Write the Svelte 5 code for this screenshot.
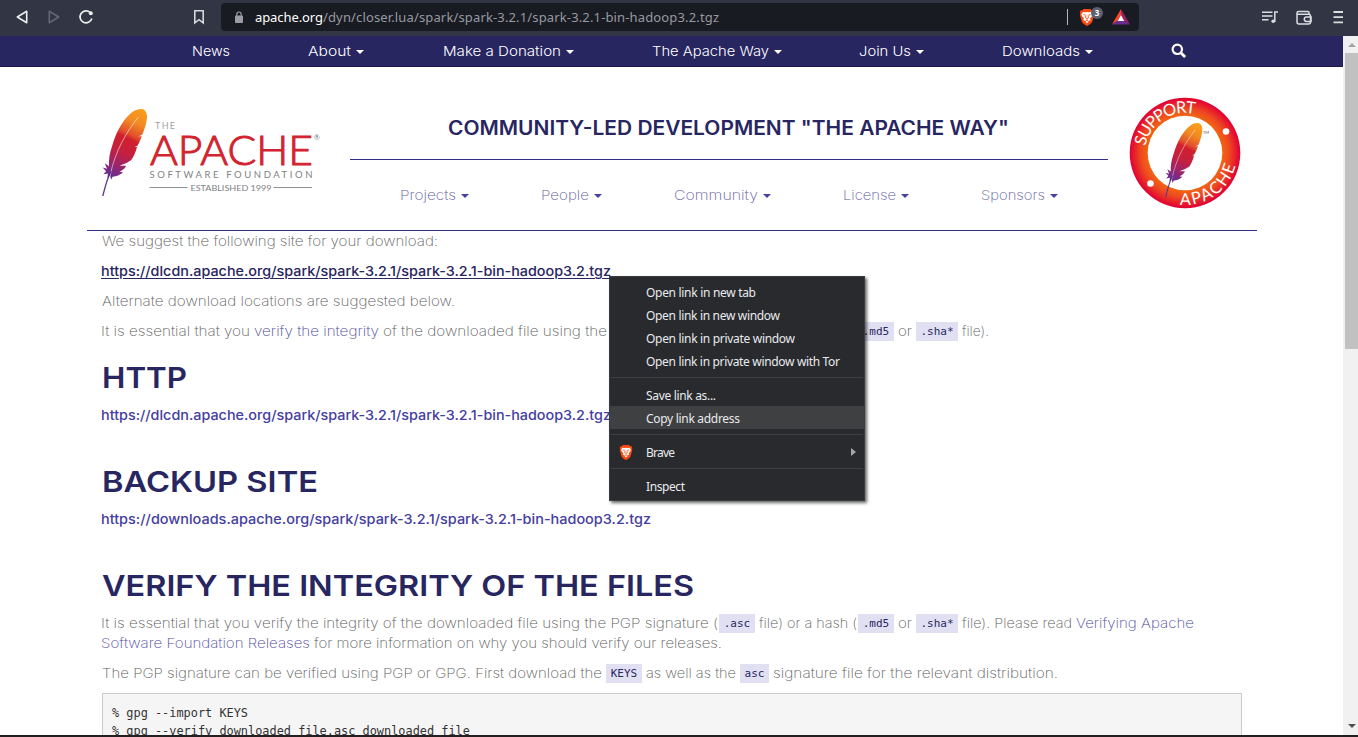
<script>
  const topNav = [
    ['News', 192, 230, false],
    ['About', 308, 351, true],
    ['Make a Donation', 443, 561, true],
    ['The Apache Way', 652, 769, true],
    ['Join Us', 859, 911, true],
    ['Downloads', 1002, 1080, true]
  ];
  const subNav = [
    ['Projects', 400, 456],
    ['People', 541, 589],
    ['Community', 674, 758],
    ['License', 843, 896],
    ['Sponsors', 981, 1045]
  ];
  const intro = [
    [['We suggest the following site for your download:', 102, 438, 'text']],
    [['https://dlcdn.apache.org/spark/spark-3.2.1/spark-3.2.1-bin-hadoop3.2.tgz', 101, 611, 'strong hovered']],
    [['Alternate download locations are suggested below.', 102, 455, 'text']],
    [
      ['It is essential that you', 101, 250, 'text'],
      ['verify the integrity', 254, 379, 'link'],
      ['of the downloaded file using the', 383, 607, 'text'],
      ['PGP signature (', 611, 718, 'text'],
      ['.asc', 719, 755, 'code'],
      ['file) or a hash (', 759, 857, 'text'],
      ['.md5', 858, 894, 'code'],
      ['or', 898, 912, 'text'],
      ['.sha*', 916, 958, 'code'],
      ['file).', 962, 989, 'text']
    ]
  ];
  const verify = [
    [
      ['It is essential that you verify the integrity of the downloaded file using the PGP signature (', 101, 718, 'text'],
      ['.asc', 719, 755, 'code'],
      ['file) or a hash (', 759, 857, 'text'],
      ['.md5', 858, 894, 'code'],
      ['or', 898, 912, 'text'],
      ['.sha*', 916, 958, 'code'],
      ['file). Please read', 962, 1072, 'text'],
      ['Verifying Apache', 1076, 1194, 'link']
    ],
    [
      ['Software Foundation Releases', 101, 310, 'link'],
      ['for more information on why you should verify our releases.', 314, 722, 'text']
    ],
    [
      ['The PGP signature can be verified using PGP or GPG. First download the', 102, 602, 'text'],
      ['KEYS', 606, 642, 'code'],
      ['as well as the', 646, 736, 'text'],
      ['asc', 740, 769, 'code'],
      ['signature file for the relevant distribution.', 773, 1058, 'text']
    ]
  ];
  const menu = [
    ['Open link in new tab', 110],
    ['Open link in new window', 134],
    ['Open link in private window', 149],
    ['Open link in private window with Tor', 194],
    null,
    ['Save link as...', 70],
    ['Copy link address', 94],
    null,
    ['Brave', 29],
    null,
    ['Inspect', 39]
  ];

  function naturalWidth(node) {
    const range = document.createRange();
    range.selectNodeContents(node);
    return range.getBoundingClientRect().width;
  }
  // Spreads the letters so the text fills the width given.
  function fit(node, width) {
    node.style.width = width + 'px';
    node.style.letterSpacing = (width - naturalWidth(node)) / (node.textContent.length - 1) + 'px';
  }
  function widen(node, width) {
    const natural = naturalWidth(node);
    node.style.width = natural + 'px';
    node.style.marginRight = width - natural + 'px';
    node.style.transform = `scaleX(${width / natural})`;
  }
  const gap = (list, i, start) => list[i][1] - (i ? list[i - 1][2] : start);
</script>

{#snippet row(segs)}
  <div class="line">
    {#each segs as s, i}
      {#if s[3] === 'code'}
        <code style:width="{s[2] - s[1]}px" style:margin-left="{gap(segs, i, 102)}px">{s[0]}</code>
      {:else}
        <span class="fit {s[3]}" style:margin-left="{gap(segs, i, 102)}px" use:widen={s[2] - s[1]}>{s[0]}</span>
      {/if}
    {/each}
  </div>
{/snippet}

{#snippet lion(w, h)}
  <svg width={w} height={h} viewBox="0 0 16 18">
    <path fill="#fb4a10" d="M4.5 1h7l1.3 1.4 1.5-.1 1 2.2-.5 1.3.3 1.2-2 7.1c-.3 1-3.8 3.6-5.1 3.9-1.300-.3-4.800-2.900-5.100-3.900l-2-7.100.3-1.200L.7 4.500l1-2.200 1.500.1z" />
    <path fill="#fff" d="M4 4l2.200.3L8 4l1.800.3L12 4l1.600 2.200-.6 2-2 2.200.7 1.500-2 1.100L8 11.700 6.300 13l-2-1.100.7-1.500-2-2.200-.6-2zM6.300 13.700L8 12.800l1.700.9L8 15.200z" />
    <path fill="none" stroke="#fb4a10" stroke-width=".9" d="M4.300 6.600l2.300.6M11.700 6.600l-2.300.6M7 7.500l-.5 2.300L8 10.500l1.500-.7L9 7.500M8 10.500v1.200" />
  </svg>
{/snippet}

{#snippet feather(id)}
  <defs>
    <linearGradient id={id} x1="42" y1="0" x2="8" y2="72" gradientUnits="userSpaceOnUse">
      <stop offset="0" stop-color="#f9a01b" />
      <stop offset=".2" stop-color="#f28a22" />
      <stop offset=".36" stop-color="#e2502c" />
      <stop offset=".42" stop-color="#d0202f" />
      <stop offset=".6" stop-color="#c5203e" />
      <stop offset=".78" stop-color="#9b2468" />
      <stop offset=".88" stop-color="#7a2a86" />
      <stop offset="1" stop-color="#5c2d91" />
    </linearGradient>
  </defs>
  <path fill="url(#{id})" d="M40 .1c3 .4 5 3.400 5 7.900-.2 6-2.300 11.800-4.600 17.500L36.500 27.500l3.300-.4c-1.200 3.700-2.600 6.800-4.300 9.600l-2.800 1.200 2.300.2c-1.300 5.200-3.200 9.400-5.700 13l-4.300 2.600-7.500 3 6.700.1c-1.500 2.700-3.500 4.600-6.600 6l3.500.5c-3 2.700-6.600 4.200-10.500 4.400l-1.500 3-1-4.200-2.700 2.500.5-4.600-4.400.8 2.600-3-3.500-3.800 4.400 1.400-2.200-5.500 4.200 2.900c-.5-6.800.8-13.500 3.200-20.500C14.500 22 22 9 31 2.600 33.800.9 37-.2 40 .1z" />
  <path fill="none" stroke="#fff" stroke-opacity=".6" stroke-width=".9" d="M36.500 8C25 22 13 42 8 67" />
  <path fill="none" stroke="#5c3390" stroke-width="1.300" d="M9 62C5.500 69 3 78 .8 87" />
{/snippet}

<div class="screen">
  <div class="browser">
    <svg class="history" width="100" height="36" viewBox="0 0 100 36" fill="none" stroke-width="1.600" stroke-linejoin="round">
      <path stroke="#eeeef1" d="M26.700 11.300v11.400L17.300 17z" />
      <path stroke="#646874" d="M49.300 11.300v11.400L58.700 17z" />
      <path stroke="#eeeef1" stroke-width="1.700" d="M90.200 12.500A6 6 0 1 0 91.800 18.500" />
      <circle cx="90.800" cy="13.300" r="2" fill="#eeeef1" />
    </svg>
    <svg class="bookmark" width="12" height="16" viewBox="0 0 12 16" fill="none" stroke="#d6d7dc" stroke-width="1.600">
      <path d="M1.800 1.800h8.400v12L6 10.700l-4.200 3.100z" />
    </svg>
    <div class="address">
      <svg class="lock" width="10" height="13" viewBox="0 0 10 13">
        <rect x="1" y="4.500" width="8" height="7.500" rx="1" fill="#9b9ca6" />
        <path d="M2.800 5V3.200a2.200 2.200 0 0 1 4.400 0V5" fill="none" stroke="#9b9ca6" stroke-width="1.200" />
      </svg>
      <span class="fit host" use:fit={68}>apache.org</span><span class="fit path" use:fit={396}>/dyn/closer.lua/spark/spark-3.2.1/spark-3.2.1-bin-hadoop3.2.tgz</span>
      <div class="shields">
        {@render lion(16, 18)}
        <b>3</b>
      </div>
      <svg class="bat" width="18" height="16" viewBox="0 0 18 16">
        <path d="M9 0L0 15.500 6 11.500 9 6z" fill="#ff4724" />
        <path d="M9 0l9 15.500-6-4L9 6z" fill="#9e1f63" />
        <path d="M0 15.500h18l-6-4H6z" fill="#662d91" />
        <path d="M9 6l3.300 6H5.700z" fill="#fff" />
      </svg>
    </div>
    <svg class="tools" width="84" height="20" viewBox="0 0 84 20" fill="none" stroke="#dcdde1" stroke-width="1.500">
      <path d="M0 4.200h10.500M0 8h10.500M0 11.800h6.500M12.800 14V4h3.200" />
      <circle cx="11.200" cy="13.300" r="1.800" fill="#dcdde1" stroke="none" />
      <path d="M47 6V4.500q0-1-1-1H36.500q-1.500 0-1.500 1.500v9q0 2 2 2h9.500q2 0 2-2V8q0-1.700-1.700-1.700H35.500" />
      <path d="M49 9h-4.500a2.200 2.200 0 0 0 0 4.400H49z" />
      <path d="M71.500 4h9.500M71.500 9.200h9.500M71.500 14.400h9.500" stroke-width="1.800" />
    </svg>
  </div>

  <div class="viewport">
    <div class="page">
      <nav class="top">
        {#each topNav as n, i}
          <a style:margin-left="{i ? n[1] - topNav[i - 1][2] - (topNav[i - 1][3] ? 13 : 0) : n[1]}px">
            <span class="fit" use:widen={n[2] - n[1]}>{n[0]}</span>{#if n[3]}<i class="caret"></i>{/if}
          </a>
        {/each}
        <svg class="search" width="16" height="16" viewBox="0 0 16 16" fill="none" stroke="#fff">
          <circle cx="6.300" cy="6.300" r="4.700" stroke-width="2.200" />
          <path d="M9.800 9.800l4.300 4.300" stroke-width="2.800" />
        </svg>
      </nav>

      <header>
        <svg class="logo" width="220" height="92" viewBox="0 0 220 92">
          <g transform="translate(1 2)">{@render feather('plumeLogo')}</g>
          <g font-family="Lato, sans-serif">
            <text x="54" y="22" font-size="9" fill="#a0a1a4" textLength="20">THE</text>
            <text x="49" y="58" font-size="41.500" font-weight="300" fill="#d2232e" stroke="#d2232e" stroke-width="1" textLength="163" lengthAdjust="spacingAndGlyphs">APACHE</text>
            <text x="213" y="33" font-size="7" fill="#77787b">®</text>
            <text x="48.500" y="71" font-size="9.500" fill="#808184" textLength="163">SOFTWARE FOUNDATION</text>
            <text x="89.500" y="84" font-size="8" fill="#808184" textLength="81" lengthAdjust="spacingAndGlyphs">ESTABLISHED 1999</text>
          </g>
          <path d="M48.500 80.500h38M172.500 80.500h38.500" stroke="#909295" />
        </svg>

        <div class="middle">
          <h1><span class="fit" use:widen={561}>COMMUNITY-LED DEVELOPMENT "THE APACHE WAY"</span></h1>
          <nav class="sub">
            {#each subNav as n, i}
              <a style:margin-left="{i ? n[1] - subNav[i - 1][2] - 13 : 50}px">
                <span class="fit" use:widen={n[2] - n[1]}>{n[0]}</span><i class="caret"></i>
              </a>
            {/each}
          </nav>
        </div>

        <svg class="badge" width="112" height="112" viewBox="0 0 112 112">
          <defs>
            <radialGradient id="ring">
              <stop offset=".65" stop-color="#f26a0f" />
              <stop offset=".8" stop-color="#ee4a20" />
              <stop offset="1" stop-color="#e00034" />
            </radialGradient>
            <path id="arcTop" d="M16 56A40 40 0 0 1 96 56" transform="rotate(-33 56 56)" />
            <path id="arcBottom" d="M4 56A52 52 0 0 0 108 56" transform="rotate(-35 56 56)" />
          </defs>
          <circle cx="56" cy="56" r="55.300" fill="url(#ring)" />
          <circle cx="56" cy="56" r="37.300" fill="#fff" />
          <circle cx="97" cy="34.500" r="3.300" fill="#fff" />
          <circle cx="21.500" cy="86.500" r="3.300" fill="#fff" />
          <g font-family="Lato, sans-serif" font-size="16.500" fill="#fff" text-anchor="middle">
            <text><textPath href="#arcTop" startOffset="50%" textLength="66">SUPPORT</textPath></text>
            <text><textPath href="#arcBottom" startOffset="50%" textLength="74">APACHE</textPath></text>
          </g>
          <g transform="translate(36 26) scale(.83 .85)">{@render feather('plumeBadge')}</g>
          <text x="74" y="37" font-family="Lato, sans-serif" font-size="4" fill="#555">TM</text>
        </svg>
      </header>

      <main>
        {#each intro as segs}
          <div class="para">{@render row(segs)}</div>
        {/each}
        <h2><span class="fit" use:widen={85}>HTTP</span></h2>
        {@render row([['https://dlcdn.apache.org/spark/spark-3.2.1/spark-3.2.1-bin-hadoop3.2.tgz', 101, 611, 'strong']])}
        <h2 class="later"><span class="fit" use:widen={216}>BACKUP SITE</span></h2>
        {@render row([['https://downloads.apache.org/spark/spark-3.2.1/spark-3.2.1-bin-hadoop3.2.tgz', 101, 651, 'strong']])}
        <h2 class="later"><span class="fit" use:widen={592}>VERIFY THE INTEGRITY OF THE FILES</span></h2>
        {@render row(verify[0])}
        <div class="para">{@render row(verify[1])}</div>
        <div class="para">{@render row(verify[2])}</div>
        <pre>% gpg --import KEYS
% gpg --verify downloaded_file.asc downloaded_file</pre>
      </main>
    </div>

    <div class="scrollbar">
      <i class="up"></i>
      <div class="thumb"></div>
      <i class="down"></i>
    </div>
  </div>

  <div class="menu">
    {#each menu as m}
      {#if m}
        <div class="item" class:active={m[0] === 'Copy link address'}>
          <div class="icon">{#if m[0] === 'Brave'}{@render lion(14, 16)}{/if}</div>
          <span class="fit" use:fit={m[1]}>{m[0]}</span>
          {#if m[0] === 'Brave'}<i class="more"></i>{/if}
        </div>
      {:else}
        <hr />
      {/if}
    {/each}
  </div>
</div>

<style>
  :global(body) { overflow: hidden; }
  .screen {
    box-sizing: border-box;
    position: relative;
    display: flex;
    flex-direction: column;
    width: 1358px;
    height: 737px;
    overflow: hidden;
    background: #fff;
    border-bottom: 2px solid #231f20;
    font-family: Inter, sans-serif;
    font-size: 13.500px;
    color: #606060;
  }
  svg { display: block; flex: none; }
  .fit { display: block; flex: none; white-space: nowrap; transform-origin: 0 50%; }

  .browser { display: flex; flex: none; height: 36px; background: #323543; }
  .bookmark { margin: 9px 22px 0 93px; }
  .address {
    display: flex;
    align-items: center;
    box-sizing: border-box;
    width: 918px;
    height: 28px;
    margin: 3px 0 0 -6px;
    padding: 0 9px 0 13px;
    border-radius: 4px;
    background: #191b22;
    font: 13px/28px "Noto Sans", sans-serif;
  }
  .lock { margin-right: 11px; }
  .host { color: #fff; }
  .path { color: #9799a0; }
  .shields {
    position: relative;
    margin-left: auto;
    padding-left: 11px;
    border-left: 1px solid #b7b8bd;
    height: 16px;
    margin-right: 16px;
    width: 17px;
  }
  .shields svg { margin-top: -1px; }
  .shields b {
    position: absolute;
    left: 23px;
    top: -2px;
    width: 12px;
    height: 12px;
    border-radius: 6px;
    background: #5d6070;
    color: #fff;
    font: 700 8px/12px "Noto Sans", sans-serif;
    text-align: center;
  }
  .tools { margin: 8px 0 0 123px; }

  .viewport { display: flex; height: 699px; overflow: hidden; }
  .page { width: 1343px; overflow: hidden; }
  nav { display: flex; align-items: center; }
  nav a { display: flex; align-items: center; }
  .caret { margin: 2px 0 0 5px; border: 4px solid transparent; border-top-color: currentColor; border-bottom: 0; }
  .top { box-sizing: border-box; height: 31px; background: #282661; border-bottom: 1px solid #1b1848; color: #fff; font-weight: 350; }
  .search { margin: -1px 0 0 78px; }

  header {
    display: flex;
    box-sizing: border-box;
    width: 1170px;
    height: 164px;
    margin-left: 87px;
    padding-left: 14px;
    border-bottom: 1px solid #303088;
  }
  .logo { margin: 40px 29px 0 0; overflow: visible; }
  .middle { width: 758px; }
  h1 {
    height: 93px;
    box-sizing: border-box;
    margin: 0;
    padding: 49px 0 0 98px;
    border-bottom: 1px solid #303088;
    font-size: 19.500px;
    line-height: 24px;
    font-weight: 570;
    color: #282661;
  }
  .sub { height: 20px; margin-top: 25px; font-weight: 200; }
  .sub .caret { color: #4540a5; }
  .sub span { color: #5f5c9c; }
  .badge { margin: 30px 0 0 21px; }

  main { width: 1140px; padding-left: 102px; }
  .para { margin-bottom: 10px; }
  .line { display: flex; height: 20px; line-height: 20px; }
  .text, .link { font-weight: 200; }
  .link { color: #4f4aa0; }
  .strong { font-weight: 550; color: #4540a0; }
  .hovered { color: #282661; text-decoration: underline; text-underline-offset: 2px; }
  code {
    flex: none;
    height: 19px;
    margin-top: 1px;
    background: #e0e0f2;
    color: #282661;
    text-align: center;
    font: 11px/20px "DejaVu Sans Mono", monospace;
  }
  h2 { margin: 20px 0 10px; height: 34px; font-size: 29px; line-height: 34px; font-weight: 570; color: #282661; }
  h2.later { margin-top: 40px; }
  pre {
    box-sizing: border-box;
    width: 1140px;
    height: 90px;
    margin: 0;
    padding: 10px 9px;
    border: 1px solid #ccc;
    background: #f5f5f5;
    color: #333;
    font: 11.900px/18px "DejaVu Sans Mono", monospace;
  }

  .scrollbar { display: flex; flex-direction: column; align-items: center; width: 15px; background: #f1f1f1; }
  .up { margin: 7px 0 6px 2px; border: 4px solid transparent; border-bottom-color: #a3a3a3; border-top: 0; }
  .thumb { width: 13px; height: 296px; margin-left: 2px; background: #c1c1c1; }
  .down { margin: auto 0 7px 2px; border: 4px solid transparent; border-top-color: #505050; border-bottom: 0; }

  .menu {
    position: absolute;
    left: 609px;
    top: 276px;
    box-sizing: border-box;
    width: 256px;
    height: 225px;
    padding-top: 3px;
    border: 1px solid #3c3d40;
    background: #292a2d;
    box-shadow: 2px 2px 3px rgba(0, 0, 0, .6);
    color: #e8eaed;
    font: 12px/23px "Noto Sans", sans-serif;
  }
  .item { display: flex; align-items: center; height: 23px; }
  .item .fit { padding-top: 2px; }
  .active { background: #3f4042; }
  .icon { width: 27px; padding-left: 9px; }
  .more { margin: 0 8px 0 auto; border: 4px solid transparent; border-left: 5px solid #a5a6a9; border-right: 0; }
  hr { height: 1px; margin: 5px 1px; border: 0; background: #3f4043; }
</style>
